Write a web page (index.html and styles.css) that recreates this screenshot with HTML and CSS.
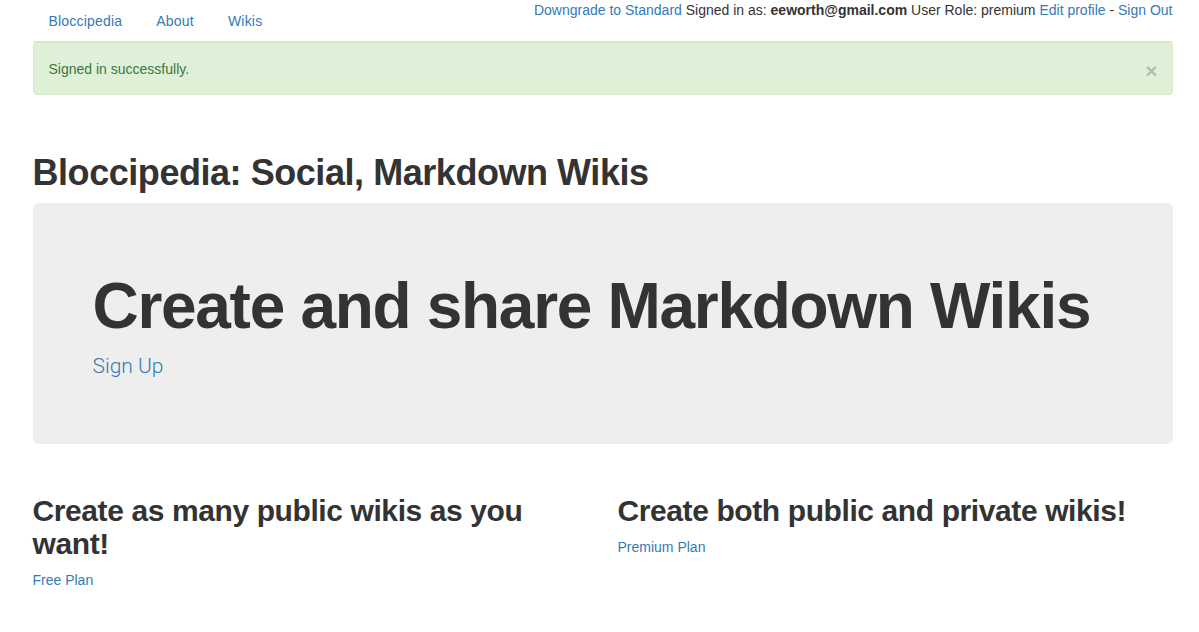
FILE: index.html
```html
<!DOCTYPE html>
<html>
<head>
<meta charset="utf-8">
<title>Bloccipedia</title>
<link rel="stylesheet" href="styles.css">
</head>
<body>
<div class="container">
  <div class="topbar">
    <ul class="nav-tabs">
      <li><a href="#">Bloccipedia</a></li>
      <li><a href="#">About</a></li>
      <li><a href="#">Wikis</a></li>
    </ul>
    <div class="user-info">
      <a href="#">Downgrade to Standard</a> Signed in as: <strong>eeworth@gmail.com</strong> User Role: premium <a href="#">Edit profile</a> - <a href="#">Sign Out</a>
    </div>
  </div>
  <div class="alert">
    <span>Signed in successfully.</span>
    <button class="close" type="button">&times;</button>
  </div>
  <h1 class="page-title">Bloccipedia: Social, Markdown Wikis</h1>
  <div class="jumbotron">
    <h1>Create and share Markdown Wikis</h1>
    <p><a href="#">Sign Up</a></p>
  </div>
  <div class="row">
    <div class="col">
      <h2>Create as many public wikis as you want!</h2>
      <a href="#">Free Plan</a>
    </div>
    <div class="col">
      <h2>Create both public and private wikis!</h2>
      <a href="#">Premium Plan</a>
    </div>
  </div>
</div>
</body>
</html>
```

FILE: styles.css
```css
* { box-sizing: border-box; }
html, body { margin: 0; padding: 0; }
body {
  font-family: "Liberation Sans", Arial, Helvetica, sans-serif;
  font-size: 14px;
  line-height: 20px;
  color: #333;
  background: #fff;
}
a { color: #337ab7; text-decoration: none; }
.container {
  width: 1170px;
  margin: 0 auto;
  padding: 0 15px 0 15px;
  position: relative;
  left: 3px;
}
.topbar {
  display: flex;
  justify-content: space-between;
  align-items: flex-start;
  border-bottom: 1px solid #ddd;
  padding-top: 1px;
}
.nav-tabs {
  list-style: none;
  margin: 0;
  padding: 0;
  display: flex;
  gap: 2px;
}
.nav-tabs a {
  display: block;
  padding: 10px 16px;
  line-height: 20px;
  letter-spacing: 0.2px;
}
.user-info {
  margin-top: -1px;
  white-space: nowrap;
}
.user-info strong { font-weight: bold; }
.alert {
  display: flex;
  justify-content: space-between;
  align-items: center;
  padding: 15px 20px 15px 15px;
  border: 1px solid #d6e9c6;
  border-radius: 4px;
  background: #dff0d8;
  color: #3c763d;
  margin-bottom: 20px;
}
.close {
  background: none;
  border: 0;
  padding: 0;
  font-family: "Liberation Sans", Arial, sans-serif;
  font-size: 21px;
  font-weight: bold;
  line-height: 1;
  color: #000;
  opacity: .2;
  position: relative;
  top: 2px;
  right: -6px;
}
.page-title {
  font-size: 36px;
  font-weight: bold;
  letter-spacing: -0.45px;
  line-height: 1.1;
  margin: 58px 0 10px;
}
.jumbotron {
  background: #eee;
  border-radius: 6px;
  padding: 48px 60px;
  margin-bottom: 30px;
}
.jumbotron h1 {
  font-size: 64px;
  font-weight: bold;
  letter-spacing: -1.3px;
  white-space: nowrap;
  line-height: 1.1;
  margin: 20px 0 10px;
  color: #333;
}
.jumbotron p {
  font-family: Roboto, "Liberation Sans", sans-serif;
  font-size: 21px;
  font-weight: 300;
  line-height: 30px;
  margin: 0 0 15px;
}
.row {
  display: grid;
  grid-template-columns: 1fr 1fr;
  column-gap: 30px;
}
.col h2 {
  font-size: 30px;
  font-weight: bold;
  letter-spacing: -0.4px;
  line-height: 1.1;
  margin: 20px 0 10px;
  color: #333;
}
```
